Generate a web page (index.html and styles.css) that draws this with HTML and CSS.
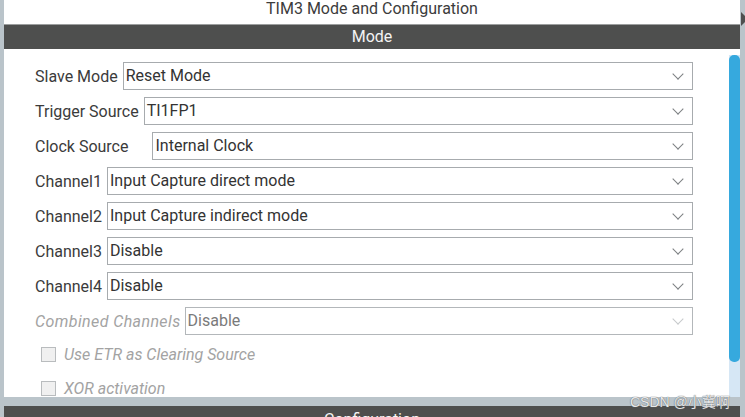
FILE: index.html
```html
<!DOCTYPE html>
<html>

<head>
    <title>TIM3 Mode and Configuration</title>
    <meta charset="utf-8">
    <link rel="stylesheet" href="styles.css">
</head>

<body>
    <div class="window">
        <div class="edge-right"><span class="arrow"></span></div>
        <div class="title">TIM3 Mode and Configuration</div>
        <div class="section-bar">Mode</div>

        <div class="pane">
            <div class="form">
                <div class="row">
                    <span class="label">Slave Mode</span>
                    <div class="select">Reset Mode<span class="chevron"></span></div>
                </div>
                <div class="row">
                    <span class="label">Trigger Source</span>
                    <div class="select">TI1FP1<span class="chevron"></span></div>
                </div>
                <div class="row">
                    <span class="label">Clock Source</span>
                    <div class="select wide-gap">Internal Clock<span class="chevron"></span></div>
                </div>
                <div class="row">
                    <span class="label">Channel1</span>
                    <div class="select">Input Capture direct mode<span class="chevron"></span></div>
                </div>
                <div class="row">
                    <span class="label">Channel2</span>
                    <div class="select">Input Capture indirect mode<span class="chevron"></span></div>
                </div>
                <div class="row">
                    <span class="label">Channel3</span>
                    <div class="select">Disable<span class="chevron"></span></div>
                </div>
                <div class="row">
                    <span class="label">Channel4</span>
                    <div class="select">Disable<span class="chevron"></span></div>
                </div>
                <div class="row disabled">
                    <span class="label">Combined Channels</span>
                    <div class="select">Disable<span class="chevron"></span></div>
                </div>
                <div class="check disabled">
                    <span class="box"></span>
                    <span class="label">Use ETR as Clearing Source</span>
                </div>
                <div class="check disabled">
                    <span class="box"></span>
                    <span class="label">XOR activation</span>
                </div>
            </div>
            <div class="scrollbar"><div class="thumb"></div></div>
        </div>

        <div class="gap-strip"></div>
        <div class="section-bar bottom">Configuration</div>
    </div>

    <div class="watermark">CSDN @小冀啊</div>
</body>

</html>
```

FILE: styles.css
```css
html, body {
    margin: 0;
    padding: 0;
}

body {
    width: 745px;
    height: 417px;
    overflow: hidden;
    background: #fff;
    font-family: Roboto, "Liberation Sans", "Noto Sans CJK SC", sans-serif;
    color: #3b3b3b;
    position: relative;
}

.window {
    display: flex;
    flex-direction: column;
    border-left: 4px solid #bac4ca;
    padding-right: 5px;
    position: relative;
}

.window > div {
    flex-shrink: 0;
}

.edge-right {
    position: absolute;
    top: 0;
    right: 0;
    width: 5px;
    height: 100%;
    background: #bac4ca;
}

.edge-right .arrow {
    position: absolute;
    top: 12px;
    left: 1px;
    width: 0;
    height: 0;
    border-top: 7px solid transparent;
    border-bottom: 7px solid transparent;
    border-left: 7px solid #4e4f4f;
}

.title {
    height: 24px;
    line-height: 18px;
    text-align: center;
    font-size: 16px;
    color: #3c3c3c;
}

.section-bar {
    height: 24px;
    line-height: 24px;
    border-top: 1px solid #9c9e9e;
    background: #4e4f4e;
    color: #f4f4f4;
    text-align: center;
    font-size: 16px;
}

.section-bar.bottom {
    border-top: none;
    line-height: 28px;
}

.pane {
    display: flex;
    height: 348px;
    overflow: hidden;
}

.form {
    flex: 1;
    padding: 13px 0 0 31px;
    display: flex;
    flex-direction: column;
    gap: 7px;
}

.form > div {
    flex-shrink: 0;
}

.row {
    display: flex;
    align-items: center;
    height: 28px;
    width: 658px;
    font-size: 16px;
}

.row .label {
    margin-right: 5px;
    white-space: nowrap;
}

.select {
    flex: 1;
    height: 26px;
    line-height: 26px;
    border: 1px solid #a7abae;
    padding-left: 2px;
    color: #333;
    position: relative;
}

.select.wide-gap {
    margin-left: 19px;
}

.chevron {
    position: absolute;
    right: 10px;
    top: 7px;
    width: 7px;
    height: 7px;
    border-right: 1.4px solid #7c7f82;
    border-bottom: 1.4px solid #7c7f82;
    transform: rotate(45deg);
}

.disabled .label {
    color: #a3a3a3;
    font-style: italic;
}

.row.disabled .label {
    margin-right: 4px;
    letter-spacing: 0.4px;
}

.row.disabled .select {
    color: #7a7a7a;
    border-color: #b3b7ba;
}

.row.disabled .chevron {
    border-color: #c6c9cb;
}

.check {
    display: flex;
    align-items: center;
    height: 24px;
    padding-left: 6px;
    font-size: 16px;
}

.check + .check {
    margin-top: 3px;
}

.check .box {
    width: 13px;
    height: 13px;
    border: 1px solid #b9bcbe;
    background: #f0f0f0;
    margin-right: 8px;
}

.scrollbar {
    width: 11px;
    padding-top: 6px;
    background: linear-gradient(#fff 0, #fff 6px, #d6e7f5 6px);
}

.thumb {
    height: 307px;
    background: #36a9de;
    border-radius: 5px;
}

.gap-strip {
    height: 9px;
    background: #bac4ca;
    margin-left: -4px;
    margin-right: -5px;
}

.watermark {
    position: absolute;
    left: 630px;
    top: 391px;
    font-size: 14px;
    font-family: "Liberation Sans", "Noto Sans CJK SC", sans-serif;
    color: rgba(255, 255, 255, 0.85);
    text-shadow: 0 0 1px #6a6f73, 0 0 1px #6a6f73;
    white-space: nowrap;
}
```
